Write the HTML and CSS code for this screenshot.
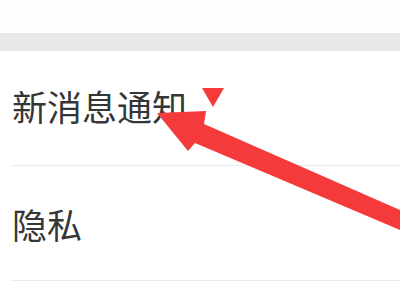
FILE: index.html
```html
<!DOCTYPE html>
<html>
<head>
<meta charset="utf-8">
<link rel="stylesheet" href="styles.css">
</head>
<body>
<div class="page">
  <div class="top"></div>
  <div class="band"></div>
  <div class="list">
    <div class="row first">新消息通知</div>
    <div class="row">隐私</div>
  </div>
  <svg class="annot" width="400" height="300" viewBox="0 0 400 300">
    <polygon points="202,88 224,88 213,107" fill="#f43a3a"/>
    <polygon points="157,113 206,111 204,124 400,210 400,230 195,143 188,151" fill="#f43a3a"/>
  </svg>
</div>
</body>
</html>
```
FILE: styles.css
```css
html, body {
  margin: 0;
  padding: 0;
  background: #fff;
}
.page {
  position: relative;
  width: 400px;
  height: 300px;
  overflow: hidden;
  font-family: "Noto Sans CJK SC", "Noto Sans", sans-serif;
}
.top {
  height: 33px;
  background: #fefefe;
}
.band {
  height: 18px;
  background: #e8e8e8;
}
.list {
  display: flex;
  flex-direction: column;
}
.row {
  height: 115px;
  display: flex;
  align-items: center;
  padding-left: 12px;
  font-size: 35px;
  color: #363636;
  position: relative;
  box-sizing: border-box;
}
.row.first {
  height: 115px;
  padding-bottom: 6px;
}
.row::after {
  content: "";
  position: absolute;
  left: 11px;
  right: 0;
  bottom: 0;
  height: 1px;
  background: #ececec;
}
.annot {
  position: absolute;
  left: 0;
  top: 0;
}
```
